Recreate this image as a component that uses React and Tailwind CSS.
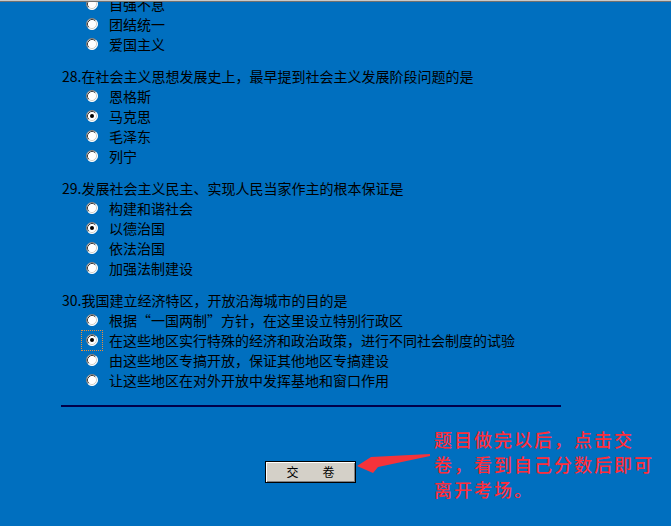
import React from 'react';

const questions = [
  {
    title: null,
    options: ['自强不息', '团结统一', '爱国主义'],
  },
  {
    title: '28.在社会主义思想发展史上，最早提到社会主义发展阶段问题的是',
    options: ['恩格斯', '马克思', '毛泽东', '列宁'],
    checked: 1,
  },
  {
    title: '29.发展社会主义民主、实现人民当家作主的根本保证是',
    options: ['构建和谐社会', '以德治国', '依法治国', '加强法制建设'],
    checked: 1,
  },
  {
    title: '30.我国建立经济特区，开放沿海城市的目的是',
    options: [
      '根据“一国两制”方针，在这里设立特别行政区',
      '在这些地区实行特殊的经济和政治政策，进行不同社会制度的试验',
      '由这些地区专搞开放，保证其他地区专搞建设',
      '让这些地区在对外开放中发挥基地和窗口作用',
    ],
    checked: 1,
    focused: 1,
  },
];

function Radio({ checked }) {
  return (
    <svg width="12" height="12" viewBox="0 0 12 12">
      <circle cx="6" cy="6" r="5.5" fill="#ffffff" />
      <path d="M2.11 9.89 A5.5 5.5 0 0 1 9.89 2.11" fill="none" stroke="#808080" strokeWidth="1" />
      <path d="M9.89 2.11 A5.5 5.5 0 0 1 2.11 9.89" fill="none" stroke="#ffffff" strokeWidth="1" />
      <path d="M2.82 9.18 A4.5 4.5 0 0 1 9.18 2.82" fill="none" stroke="#404040" strokeWidth="1" />
      <path d="M9.18 2.82 A4.5 4.5 0 0 1 2.82 9.18" fill="none" stroke="#d4d0c8" strokeWidth="1" />
      {checked && <circle cx="6" cy="6" r="2" fill="#000000" />}
    </svg>
  );
}

function Question({ q }) {
  return (
    <div className="mb-[12px]">
      {q.title && <div className="h-[20px] flex items-center">{q.title}</div>}
      {q.options.map((opt, i) => (
        <div key={i} className="h-[20px] flex items-center">
          <div
            className={`ml-[19px] w-[22px] h-[21px] flex items-center justify-center border border-dotted ${
              q.focused === i ? 'border-[#e8903c]' : 'border-transparent'
            }`}
          >
            <Radio checked={q.checked === i} />
          </div>
          <span className="ml-[6px] whitespace-nowrap">{opt}</span>
        </div>
      ))}
    </div>
  );
}

export default function App() {
  return (
    <div
      className="relative w-[671px] h-[526px] overflow-hidden bg-[#006fbf] text-black text-[14px]"
      style={{ fontFamily: '"Noto Sans CJK SC", "Noto Sans", sans-serif' }}
    >
      {/* window edge */}
      <div className="absolute top-0 left-0 right-0 z-10">
        <div className="h-px bg-[#c8c8c8]" />
        <div className="h-px bg-[#707070]" />
      </div>

      <div className="pl-[62px] mt-[-6px]">
        {questions.map((q, i) => (
          <Question key={i} q={q} />
        ))}
      </div>

      <div className="ml-[61px] mt-[15px] w-[500px] h-[2px] bg-[#00004a]" />

      <div className="flex items-start pl-[265px] mt-[20px]">
        <button className="mt-[34px] w-[91px] h-[22px] border border-black bg-[#d4d0c8] shadow-[inset_1px_1px_0_#ffffff,inset_-1px_-1px_0_#808080] text-[12px] leading-none flex items-center justify-center">
          交　　卷
        </button>
        <svg width="78" height="24" viewBox="0 0 78 24" className="mt-[25px] -ml-[2px] shrink-0">
          <polygon points="3,14 17,5 76,2 76,4 24,15 19,21" fill="#f5333a" />
        </svg>
        <div className="ml-[2px] text-[18px] leading-[25px] tracking-[2px] font-medium text-[#ff2d3a]">
          题目做完以后，点击交
          <br />
          卷，看到自己分数后即可
          <br />
          离开考场。
        </div>
      </div>
    </div>
  );
}
